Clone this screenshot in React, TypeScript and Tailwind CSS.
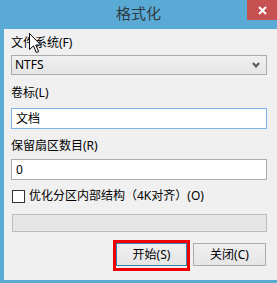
import React from "react";

const font = "font-['Noto_Sans','Noto_Sans_CJK_SC',sans-serif]";

function Cursor() {
    return (
        <svg className="absolute left-[29px] top-[33px]" width="13" height="21" viewBox="0 0 13 21">
            <path d="M0.5 0.5 L0.5 16.5 L4.5 12.8 L7.3 19.5 L9.6 18.5 L6.8 12 L11.8 12 Z" fill="#fff" stroke="#000" strokeWidth="1" />
        </svg>
    );
}

function Field({ value, focused }: { value: string; focused?: boolean }) {
    return (
        <div
            className={`h-[21px] bg-white border flex items-center px-[4px] text-[12px] text-black ${
                focused ? "border-[#7eb4ea]" : "border-[#abadb3]"
            }`}
        >
            {value}
        </div>
    );
}

export default function App() {
    return (
        <div className={`relative w-[277px] h-[283px] bg-[#5aaad6] flex flex-col ${font}`}>
            {/* Title bar */}
            <div className="relative h-[29px] flex justify-center items-center">
                <span className="text-[15px] text-[#2f3b3f] pb-[2px]">格式化</span>
                <div className="absolute right-0 top-0 w-[30px] h-[20px] bg-[#c75050] flex items-center justify-center">
                    <svg width="9" height="9" viewBox="0 0 9 9">
                        <path d="M1 1 L8 8 M8 1 L1 8" stroke="#fff" strokeWidth="2" />
                    </svg>
                </div>
            </div>

            {/* Client area */}
            <div className="flex-1 ml-[4px] mb-[3px] bg-[#f0f0f0] pl-[7px] pr-[10px] flex flex-col text-[12px] text-black">
                <div className="mt-[6px] h-[16px] leading-[16px]">文件系统(F)</div>
                <div className="mt-[4px] h-[20px] border border-[#acacac] bg-gradient-to-b from-[#f0f0f0] to-[#e5e5e5] flex items-center justify-between pl-[3px] pr-[6px]">
                    <span>NTFS</span>
                    <svg width="8" height="6" viewBox="0 0 8 6">
                        <path d="M1 1 L4 4.5 L7 1" stroke="#555" strokeWidth="2" fill="none" />
                    </svg>
                </div>

                <div className="mt-[10px] h-[16px] leading-[16px]">卷标(L)</div>
                <div className="mt-[7px]">
                    <Field value="文档" focused />
                </div>

                <div className="mt-[9px] h-[16px] leading-[16px]">保留扇区数目(R)</div>
                <div className="mt-[5px]">
                    <Field value="0" />
                </div>

                <div className="mt-[8px] h-[16px] flex items-center gap-[4px]">
                    <div className="ml-[1px] w-[13px] h-[13px] border border-[#333] bg-white" />
                    <span className="leading-[16px]">优化分区内部结构（4K对齐）(O)</span>
                </div>

                <div className="mt-[10px] ml-[1px] h-[18px] border border-[#bcbcbc] bg-[#e6e6e6]" />

                <div className="mt-[11px] flex justify-end gap-[6px] pr-[1px]">
                    <div className="relative">
                        <div className="w-[71px] h-[23px] border border-[#3c7fb1] bg-gradient-to-b from-[#f0f0f0] to-[#e5e5e5] flex items-center justify-center">
                            开始(S)
                        </div>
                        <div className="absolute -left-[3px] -top-[3px] -right-[3px] -bottom-[5px] border-[3px] border-[#f00000]" />
                    </div>
                    <div className="w-[73px] h-[23px] border border-[#acacac] bg-gradient-to-b from-[#f0f0f0] to-[#e5e5e5] flex items-center justify-center">
                        关闭(C)
                    </div>
                </div>
            </div>

            <Cursor />
        </div>
    );
}
